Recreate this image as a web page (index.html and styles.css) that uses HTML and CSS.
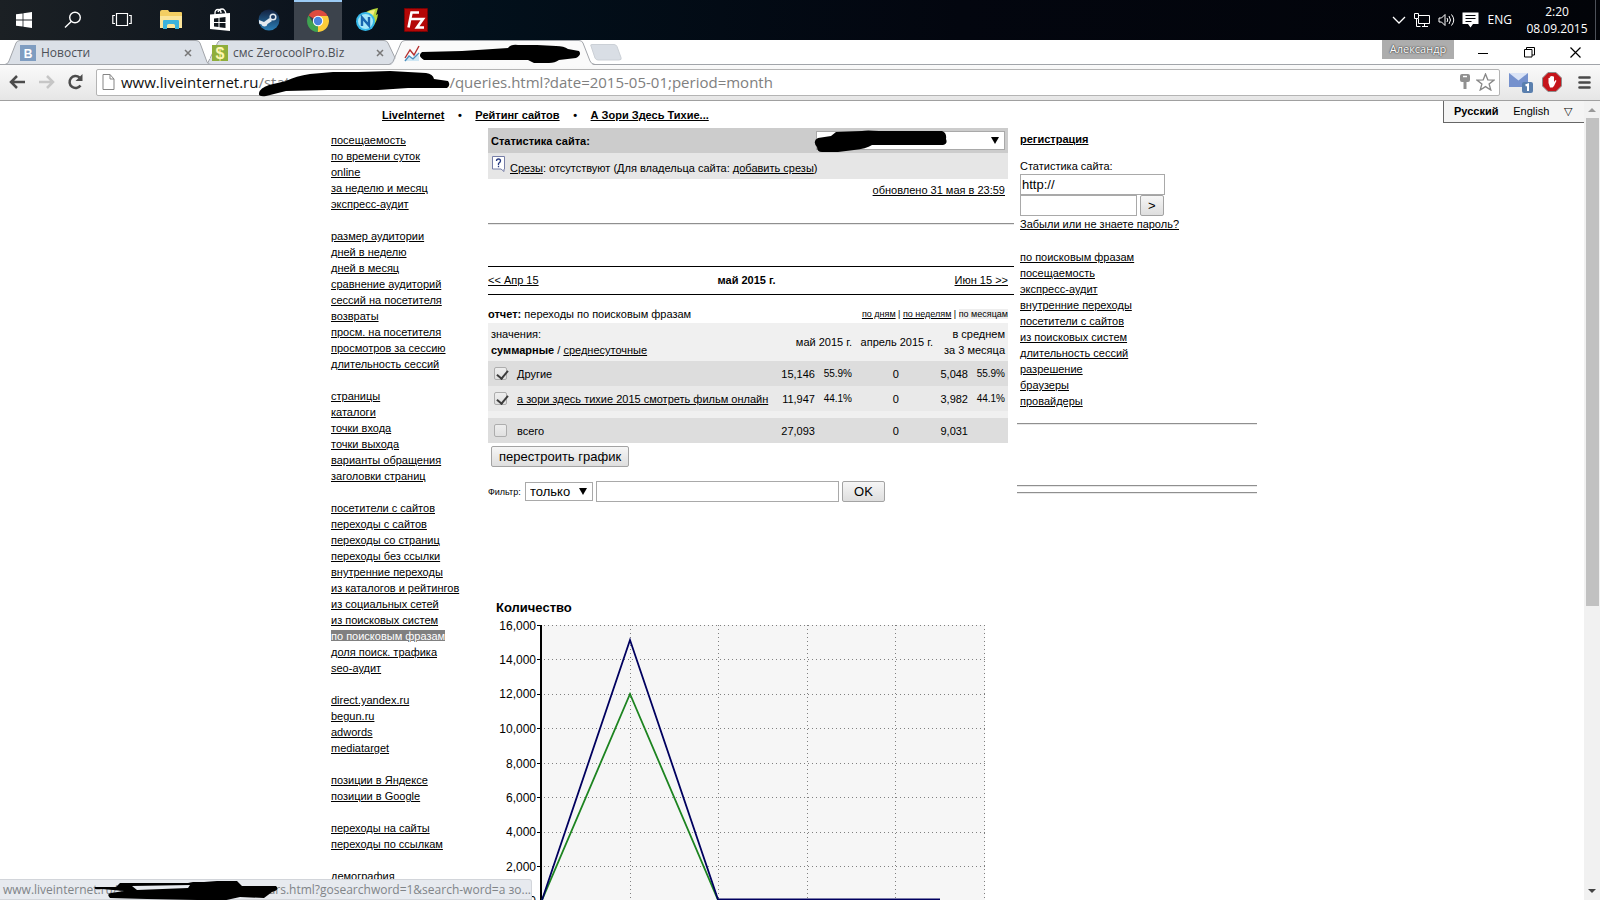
FILE: index.html
```html
<!DOCTYPE html>
<html lang="ru">
<head>
<meta charset="utf-8">
<title>LiveInternet — переходы по поисковым фразам</title>
<link rel="stylesheet" href="styles.css">
</head>
<body>
<header class="taskbar">
  <div class="apps">
    <button aria-label="Пуск"><svg width="16" height="16" viewBox="0 0 16 16" fill="#fff"><path d="M0 2.3 6.6 1.4V7.6H0ZM7.4 1.3 16 0V7.6H7.4ZM0 8.4H6.6V14.6L0 13.7ZM7.4 8.4H16V16L7.4 14.7Z"/></svg></button>
    <button aria-label="Поиск"><svg width="18" height="18" viewBox="0 0 18 18" fill="none" stroke="#fff" stroke-width="1.4"><circle cx="11" cy="6.5" r="5.3"/><path d="M7.2 10.4 1 16.6"/></svg></button>
    <button aria-label="Представление задач"><svg width="20" height="16" viewBox="0 0 20 16" fill="none" stroke="#fff" stroke-width="1.2"><path d="M4.5 1.5h11v12h-11zM3 3.5H.8v8H3M17 3.5h2.2v8H17"/></svg></button>
    <button aria-label="Проводник"><svg width="24" height="22" viewBox="0 0 24 22"><path d="M1 3q0-2 2-2h6l1.5 2H22q1 0 1 1v15H1z" fill="#f3ce62"/><path d="M1 7h22v12H1z" fill="#fbe59a"/><path d="M4 12q0-1 1-1h14q1 0 1 1v8h-4v-3.500q0-1.500-1.500-1.500h-5Q8 15 8 16.500V20H4z" fill="#3bb3dd"/></svg></button>
    <button aria-label="Магазин"><svg width="22" height="24" viewBox="0 0 22 24"><path d="M1 6.500 21 5v18L1 21z" fill="#fff"/><path d="M6 9V5q0-3.500 3-3.500T12 5m-3-1q1-3 4-3t4 5v2" fill="none" stroke="#fff" stroke-width="1.300"/><path d="M5 10.500l4.500-.5v4H5zM10.500 9.800l6-.8v5h-6zM5 15h4.500v4L5 18.500zM10.500 15h6v5l-6-.8z" fill="#10161c"/></svg></button>
    <button aria-label="Steam"><svg width="22" height="22" viewBox="0 0 22 22"><defs><linearGradient id="st" x2="0" y2="1"><stop offset="0" stop-color="#14213f"/><stop offset="1" stop-color="#2a7fb8"/></linearGradient></defs><circle cx="11" cy="11" r="10.500" fill="url(#st)"/><path d="M1 11 6 13l5.500-4 2.500 3-4.500 3q-.5 2.500-3 2.500T3.500 15.500L1 14.500z" fill="#e4eaf0"/><circle cx="15" cy="8" r="2.800" fill="#1c3a62" stroke="#e4eaf0" stroke-width="1.500"/></svg></button>
    <button class="active" aria-label="Chrome"><svg width="22" height="22" viewBox="0 0 22 22"><path d="M11 11 1.500 5.500A11 11 0 0 1 20.500 5.500z" fill="#dd4b3e"/><path d="M11 11V6h9.800A11 11 0 0 1 10.500 22z" fill="#fbcc3a"/><path d="M11 11 10.800 22A11 11 0 0 1 1.500 5.500l5 8z" fill="#3fa351"/><circle cx="11" cy="11" r="5.200" fill="#fff"/><circle cx="11" cy="11" r="4.200" fill="#4a83dc"/></svg></button>
    <button aria-label="Nox"><svg width="24" height="24" viewBox="0 0 24 24"><path d="M5 8Q14 1 23 0l-2 7 2-1q-1 8-5 12z" fill="#b7d83b"/><path d="M9 6q6-4 11-4l-3 9z" fill="#f3ef80"/><circle cx="10.500" cy="13.500" r="9.500" fill="#35b8ea"/><circle cx="10.500" cy="13.500" r="7.500" fill="#a5e8fa"/><path d="M7 18V9.500l7 8V9" fill="none" stroke="#1766b0" stroke-width="2.400"/></svg></button>
    <button aria-label="FileZilla"><svg width="24" height="24" viewBox="0 0 24 24"><path d="M.5.5h23v23H.5z" fill="#b40707" stroke="#7f0000" stroke-dasharray="2 1"/><path d="M4.500 19.500 7.500 4.500H15M6.500 11h6M12 11h7l-6 8.500h7" fill="none" stroke="#fff" stroke-width="2.600"/></svg></button>
  </div>
  <div class="tray">
    <svg width="14" height="8" viewBox="0 0 14 8" fill="none" stroke="#fff" stroke-width="1.300"><path d="M1 1l6 6 6-6"/></svg>
    <svg width="18" height="15" viewBox="0 0 18 15" fill="none" stroke="#fff"><path d="M6 2.500h10.500v8H5.500V6M9 13.500h6M11.500 10.500v3M1.500.500h4v5h-4zM3.500 5.500v8h4"/></svg>
    <svg width="17" height="14" viewBox="0 0 17 14" fill="none" stroke="#fff"><path d="M1 5h2.500L7 1.500v11L3.500 9H1zM9 5q1.500 2 0 4M11 3q3 4 0 8M13.500 1.500q4.500 5.500 0 11"/></svg>
    <svg width="17" height="16" viewBox="0 0 17 16"><path d="M.5.500h16v11.500H11L8.500 15.500 6 12H.5z" fill="#fff"/><path d="M3.500 3.500h10M3.500 6.500h10M3.500 9.500h6" stroke="#05070d"/></svg>
    <span class="lang">ENG</span>
    <time class="clock">2:20<br>08.09.2015</time>
    <i class="peek"></i>
  </div>
</header>

<div class="tabstrip">
  <svg class="tabshapes" width="640" height="25" viewBox="0 0 640 25"><path d="M207 24.500 218 2q1-1.500 3-1.500H384q3 0 4 2.500L397 22q1 2 4 2.500" fill="#dbe0e7" stroke="#a2a5aa"/><path d="M203 3 210 19" stroke="#fff"/><path d="M5 24.500Q8 24 9 21L16 3q1-2.500 4-2.500H196q3 0 4 2.500L207 22q1 2.500 4 2.500" fill="#dbe0e7" stroke="#a2a5aa"/><path d="M390 25q3-1 4-3.500L402 3q1-2 3-2H579q3 0 4 2.500L590 21q1 3 4 4z" fill="#fafafa"/><path d="M0 24.500H389q3-1 4-3L401 3q1-2.500 4-2.500H579q3 0 4 2.500L590 21q1 3 5 3.500H640" fill="none" stroke="#a2a5aa"/><path d="M591 6q-1-1.500 1-1.500h22q2 0 3 2l4 11q1 2.500-2 2.500H598q-2 0-3-2z" fill="#d9dee5" stroke="#cbd0d6"/></svg>
  <div class="tab"><svg width="16" height="16"><rect width="16" height="16" fill="#7f9dc1"/><text x="8" y="12.500" class="vk">B</text></svg><span>Новости</span><button class="close" aria-label="Закрыть"><svg width="8" height="8"><path d="M1 1l6 6M7 1 1 7" stroke="#777" stroke-width="1.500"/></svg></button></div>
  <div class="tab"><svg width="16" height="16"><rect width="16" height="16" fill="#8fae3b"/><text x="8" y="14" class="usd">$</text></svg><span>смс ZerocoolPro.Biz</span><button class="close" aria-label="Закрыть"><svg width="8" height="8"><path d="M1 1l6 6M7 1 1 7" stroke="#777" stroke-width="1.500"/></svg></button></div>
  <div class="tab current"><svg width="180" height="24" viewBox="0 0 180 24"><path d="M0 20h15v-5l-3-3-4 5-3-2z" fill="#cfe7f4"/><path d="M1 20l4-5 4 3 6-6" fill="none" stroke="#4b8fbd" stroke-width="1.300"/><path d="M1 17 6 9l4 5 5-9" fill="none" stroke="#b5302f" stroke-width="1.400"/><path d="M18 11 58 10 104 7Q107 3 114 4H133L152 5Q160 5 164 8L175 10Q178 14 172 17L155 19Q151 22 145 22H130L124 19H20Q13 15 18 11z" fill="#000"/></svg></div>
  <span class="user">Александр</span>
  <div class="wincontrols">
    <button aria-label="Свернуть"><svg width="10" height="10"><path d="M0 5.500h10" stroke="#000"/></svg></button>
    <button aria-label="Восстановить"><svg width="11" height="11" fill="none" stroke="#000"><path d="M.5 2.500h7.500v7.500H.5zM2.500 2.500V.500h8V8H8"/></svg></button>
    <button aria-label="Закрыть окно"><svg width="11" height="11"><path d="M.5.500l10 10M10.500.500l-10 10" stroke="#000" stroke-width="1.200"/></svg></button>
  </div>
</div>

<div class="toolbar">
  <button aria-label="Назад"><svg width="17" height="14" viewBox="0 0 17 14" fill="none" stroke="#4c4c4c" stroke-width="2.500"><path d="M16 7H3M8 1 2 7l6 6"/></svg></button>
  <button aria-label="Вперёд"><svg width="17" height="14" viewBox="0 0 17 14" fill="none" stroke="#c6c6c6" stroke-width="2.500"><path d="M1 7h13M9 1l6 6-6 6"/></svg></button>
  <button aria-label="Обновить"><svg width="17" height="16" viewBox="0 0 17 16"><path d="M13.500 11.500A6 6 0 1 1 12.500 3.500" fill="none" stroke="#4c4c4c" stroke-width="2.500"/><path d="M15.500 0v7H8.500z" fill="#4c4c4c"/></svg></button>
  <div class="omnibox">
    <svg width="13" height="16" viewBox="0 0 13 16" fill="#fff" stroke="#858585"><path d="M1 .5h7L12 5v10.500H1zM8 .5V5h4"/></svg>
    <div class="url" role="textbox" aria-label="Адрес"><span class="host">www.liveinternet.ru</span><span class="path">/stat/</span><span class="tail">/queries.html?date=2015-05-01;period=month</span></div>
    <svg class="urlmark" width="194" height="28" viewBox="0 0 194 28"><path d="M1 22Q2 17 11 14L28 10Q38 5 52 3L75 1H100L132 0 168 2Q175 3 176 8L190 10Q193 14 189 17L176 17 150 17 120 19H70L28 20 8 25Q0 26 1 22z"/></svg>
    <svg width="10" height="16" viewBox="0 0 10 16"><path d="M2 0h6q2 0 2 2v4q0 2-2 2H6.500v7h-3V8H2Q0 8 0 6V2q0-2 2-2z" fill="#909090"/><path d="M3 2.500h4" stroke="#fff" stroke-width="1.500"/></svg>
    <svg width="19" height="18" viewBox="0 0 19 18" fill="#fff" stroke="#888" stroke-width="1.300"><path d="M9.500 1l2.300 5.800 6.200.3-4.900 3.900 1.700 6-5.300-3.400L4.200 17l1.700-6L1 7.100l6.200-.3z"/></svg>
  </div>
  <div class="extras">
    <button aria-label="Почта"><svg width="25" height="24" viewBox="0 0 25 24"><path d="M0 3h19v14H0z" fill="#7591cd"/><path d="M0 3h19l-9.500 7.500z" fill="#dbe4f6"/><rect x="13" y="12" width="11" height="11" rx="2" fill="#5a7fae"/><path d="M16.500 15.500 19 14.500V21" stroke="#fff" stroke-width="2" fill="none"/></svg></button>
    <button aria-label="AdBlock"><svg width="20" height="20" viewBox="0 0 20 20"><path d="M6 .5h8L19.500 6v8L14 19.500H6L.5 14V6z" fill="#c5151b" stroke="#8d8d8d"/><path d="M6.500 11V6h1.300v3.500V4.500h1.400V9 4h1.400v5V4.500H12V10l1.500-2 1 .8-2.500 5.200-1.500 1.500H8z" fill="#fff"/></svg></button>
    <button class="burger" aria-label="Меню"><svg width="13" height="13" viewBox="0 0 13 13"><path d="M1.500 1.500h10M1.500 6.500h10M1.500 11.500h10" stroke="#4a4a4a" stroke-width="2.600" stroke-linecap="round"/></svg></button>
  </div>
</div>

<div class="viewport">
<div class="page">
  <div class="langs"><b>Русский</b><a href="#">English</a><span>▽</span></div>
  <div class="content">
    <nav class="crumbs"><a href="#">LiveInternet</a><i>•</i><a href="#">Рейтинг сайтов</a><i>•</i><a href="#">А Зори Здесь Тихие...</a></nav>
    <div class="columns">
      <nav class="menu">
        <ul><li><a href="#">посещаемость</a></li><li><a href="#">по времени суток</a></li><li><a href="#">online</a></li><li><a href="#">за неделю и месяц</a></li><li><a href="#">экспресс-аудит</a></li></ul>
        <ul><li><a href="#">размер аудитории</a></li><li><a href="#">дней в неделю</a></li><li><a href="#">дней в месяц</a></li><li><a href="#">сравнение аудиторий</a></li><li><a href="#">сессий на посетителя</a></li><li><a href="#">возвраты</a></li><li><a href="#">просм. на посетителя</a></li><li><a href="#">просмотров за сессию</a></li><li><a href="#">длительность сессий</a></li></ul>
        <ul><li><a href="#">страницы</a></li><li><a href="#">каталоги</a></li><li><a href="#">точки входа</a></li><li><a href="#">точки выхода</a></li><li><a href="#">варианты обращения</a></li><li><a href="#">заголовки страниц</a></li></ul>
        <ul><li><a href="#">посетители с сайтов</a></li><li><a href="#">переходы с сайтов</a></li><li><a href="#">переходы со страниц</a></li><li><a href="#">переходы без ссылки</a></li><li><a href="#">внутренние переходы</a></li><li><a href="#">из каталогов и рейтингов</a></li><li><a href="#">из социальных сетей</a></li><li><a href="#">из поисковых систем</a></li><li><a class="here" href="#">по поисковым фразам</a></li><li><a href="#">доля поиск. трафика</a></li><li><a href="#">seo-аудит</a></li></ul>
        <ul><li><a href="#">direct.yandex.ru</a></li><li><a href="#">begun.ru</a></li><li><a href="#">adwords</a></li><li><a href="#">mediatarget</a></li></ul>
        <ul><li><a href="#">позиции в Яндексе</a></li><li><a href="#">позиции в Google</a></li></ul>
        <ul><li><a href="#">переходы на сайты</a></li><li><a href="#">переходы по ссылкам</a></li></ul>
        <ul><li><a href="#">демография</a></li></ul>
      </nav>

      <main class="main">
        <div class="sitebar"><label for="site">Статистика сайта:</label>
          <span class="pick"><select id="site"><option></option></select><svg class="sitemark" width="134" height="23" viewBox="0 0 134 23"><path d="M4 8 17 6 22 2 48 1Q52 0 65 1H100L128 1Q133 3 132 9 134 14 129 15H90L58 15Q52 19 40 20L24 22H8Q3 22 3 17-2 11 4 8z"/></svg></span>
        </div>
        <div class="slices"><svg width="13" height="16" viewBox="0 0 13 16"><path d="M.5.500h12v12.500H12v2.500L9 13H.5z" fill="#fff" stroke="#777ea6"/><path d="M4.500 5q0-2 2-2t2 2q0 1-2 2.500v1.500M6.500 9.800v1.400" stroke="#283b80" stroke-width="1.300" fill="none"/></svg><span><a href="#">Срезы</a>: отсутствуют (Для владельца сайта: <a href="#">добавить срезы</a>)</span></div>
        <p class="updated"><a href="#">обновлено 31 мая в 23:59</a></p>
        <hr>
        <div class="period"><a href="#">&lt;&lt; Апр 15</a><b>май 2015 г.</b><a href="#">Июн 15 &gt;&gt;</a></div>
        <form class="report">
        <div class="title"><span><b>отчет:</b> переходы по поисковым фразам</span><small><a href="#">по дням</a> | <a href="#">по неделям</a> | <span class="sel">по месяцам</span></small></div>
        <table>
          <colgroup><col class="c-check"><col><col class="c-num"><col class="c-pct"><col class="c-apr"><col class="c-avg"><col class="c-pct"></colgroup>
          <thead><tr><th colspan="2" class="left">значения:<br><b>суммарные</b> / <a href="#">среднесуточные</a></th><th colspan="2">май 2015 г.</th><th>апрель 2015 г.</th><th colspan="2">в среднем<br>за 3 месяца</th></tr></thead>
          <tbody>
          <tr class="dark"><td><input type="checkbox" id="r1" checked></td><td class="left"><label for="r1">Другие</label></td><td>15,146</td><td class="pct">55.9%</td><td class="apr">0</td><td>5,048</td><td class="pct">55.9%</td></tr>
          <tr class="light"><td><input type="checkbox" id="r2" aria-label="а зори здесь тихие" checked></td><td class="left"><a href="#">а зори здесь тихие 2015 смотреть фильм онлайн</a></td><td>11,947</td><td class="pct">44.1%</td><td class="apr">0</td><td>3,982</td><td class="pct">44.1%</td></tr>
          <tr class="space"><td colspan="7"></td></tr>
          <tr class="dark"><td><input type="checkbox" id="r3"></td><td class="left"><label for="r3">всего</label></td><td>27,093</td><td></td><td class="apr">0</td><td>9,031</td><td></td></tr>
          </tbody>
        </table>
        <button type="button" class="btn rebuild">перестроить график</button>
        <div class="filter"><label for="mode">Фильтр:</label><span class="pick"><select id="mode"><option>только</option></select></span><input type="text" aria-label="Фраза"><button type="button" class="btn ok">OK</button></div>
        </form>
        <svg class="chart" width="520" height="330" viewBox="0 0 520 330">
          <text x="8" y="24" class="ctitle">Количество</text>
          <rect x="54" y="37" width="443" height="276" fill="#f6f6f6"/>
          <path class="grid" d="M56 37.500H497M56 71.500H497M56 106.500H497M56 140.500H497M56 175.500H497M56 209.500H497M56 244.500H497M56 278.500H497M142.500 37V312M230.500 37V312M319.500 37V312M407.500 37V312M496.500 37V312"/>
          <path d="M49 37.500h4M49 71.500h4M49 106.500h4M49 140.500h4M49 175.500h4M49 209.500h4M49 244.500h4M49 278.500h4M49 312.500h4" stroke="#000"/>
          <path d="M53 37V313" stroke="#000" stroke-width="2"/>
          <g class="axis"><text x="48" y="42">16,000</text><text x="48" y="76">14,000</text><text x="48" y="110">12,000</text><text x="48" y="145">10,000</text><text x="48" y="180">8,000</text><text x="48" y="214">6,000</text><text x="48" y="248">4,000</text><text x="48" y="283">2,000</text><text x="48" y="317">0</text></g>
          <path d="M54 312 142 106 230 312H452" fill="none" stroke="#1d8420" stroke-width="1.800"/>
          <path d="M54 312 142 52 230 311.500H452" fill="none" stroke="#00005f" stroke-width="1.800"/>
        </svg>
      </main>

      <aside class="side">
        <p class="reg"><a href="#">регистрация</a></p>
        <form class="login"><label for="login">Статистика сайта:</label><input id="login" class="wide" type="text" value="http://"><div class="pass"><input type="password" aria-label="Пароль"><button type="button" class="btn">&gt;</button></div><a href="#">Забыли или не знаете пароль?</a></form>
        <ul><li><a href="#">по поисковым фразам</a></li><li><a href="#">посещаемость</a></li><li><a href="#">экспресс-аудит</a></li><li><a href="#">внутренние переходы</a></li><li><a href="#">посетители с сайтов</a></li><li><a href="#">из поисковых систем</a></li><li><a href="#">длительность сессий</a></li><li><a href="#">разрешение</a></li><li><a href="#">браузеры</a></li><li><a href="#">провайдеры</a></li></ul>
        <hr class="h1"><hr class="h2"><hr class="h3">
      </aside>
    </div>
  </div>
</div>
<div class="scrollbar"><svg width="8" height="4"><path d="M0 4 4 0l4 4z" fill="#999"/></svg><i></i><svg width="8" height="4"><path d="M0 0l4 4 4-4z" fill="#444"/></svg></div>
</div>
<div class="status"><span>www.liveinternet.ru/stat/</span><span>ours.html?gosearchword=1&amp;search-word=а зо...</span>
<svg width="190" height="24" viewBox="0 0 190 24"><path d="M3 8H24L28 4 96 4 101 3H112L125 2 145 2 150 7 184 7Q188 11 180 13L172 19 148 18 130 22 105 21 55 20 18 19Q14 15 19 14L32 12 10 10Q1 11 3 8z"/><path d="M40 7 98 6 96 9 45 11z" fill="#e7eaef"/></svg></div>
</body>
</html>
```

FILE: styles.css
```css
* { box-sizing: border-box; }
body {
  margin: 0;
  height: 100vh;
  overflow: hidden;
  display: flex;
  flex-direction: column;
  position: relative;
  background: #fff;
  color: #000;
  font: 11px/16px "Liberation Sans", Arial, sans-serif;
}
a { color: #000; }
ul { list-style: none; margin: 0; padding: 0; }
p { margin: 0; }
svg { flex: none; }

/* taskbar */
.taskbar {
  flex: none;
  height: 40px;
  display: flex;
  justify-content: space-between;
  background: linear-gradient(90deg, #1b2024, #0b131d 20%, #02101b 30%, #03060f 60%, #020409);
  color: #fff;
}
.apps { display: flex; gap: 1px; }
.taskbar button, .toolbar button, .tabstrip button {
  background: none; border: 0; padding: 0;
  display: flex; align-items: center; justify-content: center;
}
.apps button { width: 48px; }
.apps .active { background: #3c434c; border-top: 2px solid #9ccbf5; }
.tray {
  display: flex; align-items: center; gap: 7px;
  font: 12px/16px "Open Sans", "Noto Sans", sans-serif;
}
.lang { margin-left: 2px; }
.clock { width: 76px; text-align: center; line-height: 17px; }
.peek { width: 5px; height: 40px; margin-left: -7px; border-left: 1px solid #4c5058; }

/* tabs */
.tabstrip {
  flex: none;
  height: 25px;
  display: flex;
  position: relative;
  border-bottom: 1px solid #a2a5aa;
  font: 12px/24px "Open Sans", "Noto Sans", sans-serif;
  color: #4d5057;
}
.tabshapes { position: absolute; left: 0; top: 0; }
.tab { position: relative; display: flex; align-items: center; gap: 5px; width: 192px; padding-left: 20px; height: 25px; }
.tab span { flex: 1; white-space: nowrap; }
.tab.current { width: 200px; padding: 0; margin-left: 20px; }
.tab .close { width: 8px; height: 16px; }
.vk { font: bold 12px "Liberation Sans", sans-serif; fill: #fff; text-anchor: middle; }
.usd { font: bold 16px "Liberation Sans", sans-serif; fill: #fff7b0; text-anchor: middle; }
.user {
  margin-left: auto; width: 72px; height: 19px;
  background: #adadad; color: #fff; text-align: center;
  font-size: 11px; line-height: 18px; text-shadow: 0 0 2px #333, 0 0 1px #333;
}
.wincontrols { display: flex; height: 25px; margin: 0 2px 0 6px; }
.wincontrols button { width: 46px; }

/* toolbar */
.toolbar {
  flex: none;
  height: 36px;
  display: flex;
  align-items: center;
  gap: 12px;
  padding: 0 9px 1px;
  background: linear-gradient(#fafafa, #e6e6e6);
  border-bottom: 1px solid #a0a0a0;
}
.omnibox {
  flex: 1; height: 27px; position: relative;
  display: flex; align-items: center; gap: 6px;
  padding: 0 4px 0 5px;
  background: #fff; border: 1px solid #b4b4b4; border-radius: 2px;
}
.url { flex: 1; display: flex; white-space: nowrap; font: 15px/24px "Open Sans", "Noto Sans", sans-serif; color: #808080; }
.host { color: #111; }
.path { flex: 0 0 191px; }
.urlmark { position: absolute; left: 161px; top: 1px; }
.extras { display: flex; align-items: center; gap: 8px; margin-left: -3px; }
.burger { margin-left: 8px; }

/* page */
.viewport { flex: 1; min-height: 0; display: flex; }
.page { flex: 1; overflow: hidden; position: relative; }
.langs {
  position: absolute; right: 0; top: 0;
  display: flex; justify-content: space-between; align-items: center;
  width: 141px; height: 22px; padding: 0 12px 2px 10px;
  background: #f4f4f4; border-left: 1px solid #666; border-bottom: 1px solid #666;
}
.langs a { text-decoration: none; }
.content { max-width: 930px; margin: 0 auto; }
.crumbs { display: flex; height: 27px; padding: 6px 0 0 55px; font-weight: bold; }
.crumbs i { width: 31px; text-align: center; font-style: normal; }
.columns { display: grid; grid-template-columns: 161px minmax(0, 1fr) 240px; column-gap: 3px; }
.menu { padding: 4px 0 0 4px; }
.menu ul { margin-bottom: 16px; white-space: nowrap; }
.here { background: #808080; color: #fff; font-weight: normal; }
.main { margin-left: -3px; }
.sitebar, .slices, .updated, .report table { width: calc(100% - 6px); }
.sitebar { height: 25px; padding: 0 3px; display: flex; justify-content: space-between; align-items: center; background: #ccc; font-weight: bold; }
.pick { position: relative; display: inline-flex; }
.pick::after {
  content: ""; position: absolute; right: 6px; top: 6px;
  border: 4px solid transparent; border-top: 7px solid #000; border-bottom: 0;
}
select, input[type=text], input[type=password] {
  border: 1px solid #a9a9a9; border-radius: 0; background: #fff; color: #000;
  padding: 0 1px; height: 21px; margin: 0;
  font: 13px "Liberation Sans", Arial, sans-serif;
}
select { appearance: none; padding: 0 4px; height: 19px; }
#site { width: 189px; }
.sitemark { position: absolute; left: -2px; top: -1px; }
.slices { height: 26px; padding: 3px 3px 0 4px; display: flex; gap: 5px; background: #e6e6e6; }
.slices span { padding-top: 4px; }
.updated { text-align: right; padding: 3px 3px 0 0; }
hr { margin: 0; border: 0; height: 2px; border-top: 1px solid #8f8f8f; border-bottom: 1px solid #e8e8e8; }
.main hr { margin-top: 25px; }
.period {
  display: flex; justify-content: space-between; align-items: center;
  height: 29px; margin-top: 41px; padding: 0 6px 2px 0;
  border-top: 1px solid #000; border-bottom: 1px solid #000;
}
.title { display: flex; justify-content: space-between; width: calc(100% - 6px); margin-top: 11px; height: 17px; }
.title small { font-size: 9px; }
.sel { background: #eee; }
table { border-collapse: collapse; table-layout: fixed; }
.c-check { width: 26px; } .c-num { width: 46px; } .c-pct { width: 37px; } .c-apr { width: 81px; } .c-avg { width: 35px; }
th, td { padding: 0 3px 0 0; text-align: right; font-weight: normal; white-space: nowrap; }
th { height: 38px; background: #f0f0f0; }
td { height: 25px; }
td:first-child { text-align: left; padding-left: 6px; }
.left { text-align: left; }
td.left { padding-left: 3px; }
th.left { padding-left: 3px; }
.dark { background: #ddd; }
.light { background: #e9e9e9; }
.space td { height: 7px; background: #f0f0f0; }
.pct { font-size: 10px; }
td.apr { padding-right: 37px; }
input[type=checkbox] {
  appearance: none; display: block; width: 13px; height: 13px; margin: 0;
  border: 1px solid #adadad; border-radius: 2px;
  background: linear-gradient(#eee, #e0e0e0); position: relative;
}
input[type=checkbox]:checked::after {
  content: ""; position: absolute; left: 4px; top: 0; width: 5px; height: 9px;
  border: solid #3c3c3c; border-width: 0 2px 2px 0; transform: rotate(40deg);
}
.btn {
  height: 21px; padding: 0 7px; margin: 0;
  border: 1px solid #a3a3a3; border-radius: 2px;
  background: linear-gradient(#f6f6f6, #dedede); color: #000;
  font: 13px/17px "Liberation Sans", Arial, sans-serif;
}
.rebuild { display: block; margin: 3px 0 0 3px; }
.filter { display: flex; align-items: center; gap: 3px; margin-top: 14px; }
.filter label { font-size: 9px; width: 34px; }
.filter select { width: 68px; }
.filter input { width: 243px; }
.ok { width: 43px; }
.chart { display: block; margin-top: 86px; }
.ctitle { font: bold 13px "Liberation Sans", sans-serif; }
.grid { fill: none; stroke: #808080; stroke-dasharray: 1 3; }
.axis { font: 12px "Liberation Sans", sans-serif; text-anchor: end; }

/* right column */
.side ul, .reg, .login { padding-left: 3px; }
.reg { font-weight: bold; padding-top: 3px; }
.login { margin-top: 11px; display: flex; flex-direction: column; align-items: flex-start; }
.wide { width: 145px; }
.pass { display: flex; gap: 3px; }
.pass input { width: 117px; }
.side ul { margin-top: 17px; }
.h1 { margin-top: 14px; }
.h2 { margin-top: 60px; }
.h3 { margin-top: 5px; }

.scrollbar { width: 16px; background: #f1f1f1; display: flex; flex-direction: column; align-items: center; padding: 7px 0; }
.scrollbar i { width: 13px; height: 488px; background: #c1c1c1; margin: 6px 0 auto; }

/* status bubble */
.status {
  position: absolute; left: 0; bottom: 0; width: 532px; height: 21px;
  display: flex; background: #e7eaef; border: 1px solid #d2d5da; border-left: 0; border-radius: 0 3px 0 0;
  padding-left: 3px; color: #808488; white-space: nowrap;
  font: 12px/20px "Open Sans", "Noto Sans", sans-serif;
}
.status span:first-child { width: 260px; }
.status svg { position: absolute; left: 92px; top: -1px; }
```
